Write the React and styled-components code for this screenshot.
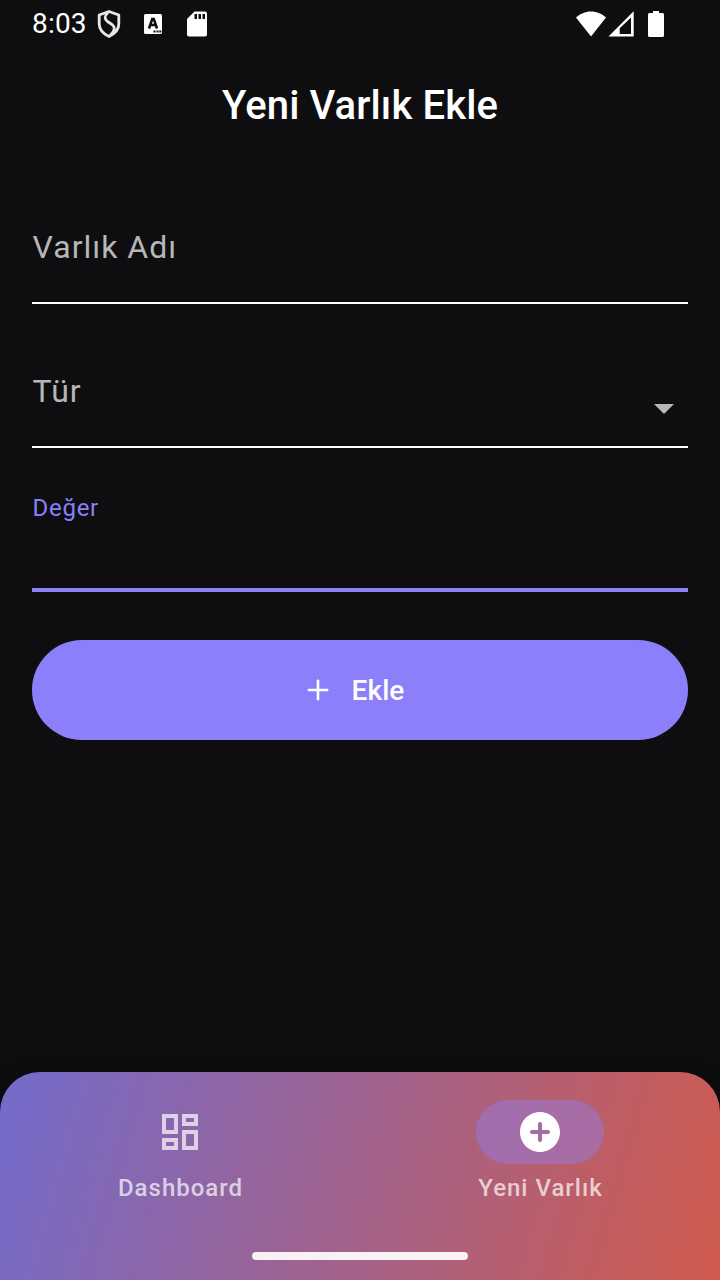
import React from "react";
import styled, { createGlobalStyle } from "styled-components";

const GlobalStyle = createGlobalStyle`
  *, *::before, *::after { box-sizing: border-box; }
  body {
    margin: 0;
    background: #0e0e10;
    font-family: Roboto, "Noto Sans", sans-serif;
  }
`;

const Screen = styled.div`
  display: flex;
  flex-direction: column;
  width: 720px;
  height: 1280px;
  overflow: hidden;
  background: #0e0e10;
  color: #fff;
`;

const StatusBar = styled.header`
  display: flex;
  align-items: center;
  justify-content: space-between;
  height: 48px;
  padding: 0 56px 0 32px;
`;

const StatusGroup = styled.div`
  display: flex;
  align-items: center;
  height: 48px;
`;

const Clock = styled.span`
  width: 65px;
  font-size: 28px;
  line-height: 48px;
  letter-spacing: 0.2px;
`;

const Icon = styled.svg`
  display: block;
  flex: none;
  width: ${(p) => p.$w}px;
  height: ${(p) => p.$h || p.$w}px;
  margin-left: ${(p) => p.$ml || 0}px;
`;

const AppBar = styled.h1`
  height: 112px;
  margin: 0;
  text-align: center;
  font-size: 40px;
  font-weight: 500;
  line-height: 116px;
  letter-spacing: 0.12px;
`;

const Form = styled.main`
  display: flex;
  flex: 1;
  flex-direction: column;
  gap: 32px;
  padding: 32px 32px 0;
`;

const Field = styled.div`
  display: flex;
  align-items: ${(p) => (p.$focused ? "flex-start" : "center")};
  justify-content: space-between;
  height: 112px;
  padding-top: ${(p) => (p.$focused ? 14 : 0)}px;
  border-bottom: ${(p) => (p.$focused ? "4px solid #8b80fa" : "2px solid #fff")};
`;

const Label = styled.span`
  padding-left: 0.6px;
  color: ${(p) => (p.$focused ? "#8b80fa" : "#b7b7b7")};
  font-size: ${(p) => (p.$focused ? 24 : 32)}px;
  line-height: ${(p) => (p.$focused ? 28 : 38)}px;
  letter-spacing: ${(p) => (p.$focused ? 0.7 : 1)}px;
`;

const DropdownArrow = styled(Icon)`
  align-self: flex-end;
  margin-bottom: 14px;
  color: #b7b7b7;
`;

const AddButton = styled.button`
  display: flex;
  align-items: center;
  justify-content: center;
  gap: 16px;
  height: 100px;
  margin: 16px 0 0;
  padding: 0 16px 0 0;
  border: 0;
  border-radius: 50px;
  background: #8b80fa;
  color: #fff;
  font: 500 28px/36px Roboto, "Noto Sans", sans-serif;
  letter-spacing: 0.1px;
`;

const AddButtonText = styled.span`
  padding-top: 2px;
`;

const NavBar = styled.nav`
  display: flex;
  flex-direction: column;
  height: 208px;
  border-radius: 40px 40px 0 0;
  background: linear-gradient(106.11deg, #736bcc, #d05a4c);
  box-shadow: 0 -4px 20px rgba(0, 0, 0, 0.2);
`;

const NavItems = styled.div`
  display: flex;
  flex: 1;
  padding-top: 28px;
`;

const NavItem = styled.div`
  display: flex;
  flex: 1;
  flex-direction: column;
  align-items: center;
  gap: 8px;
`;

const Indicator = styled.div`
  display: flex;
  align-items: center;
  justify-content: center;
  width: 128px;
  height: 64px;
  border-radius: 32px;
  background: ${(p) => (p.$active ? "rgba(140, 130, 252, 0.4)" : "transparent")};
  color: ${(p) => (p.$active ? "#fff" : "rgba(255, 255, 255, 0.7)")};
`;

const NavLabel = styled.span`
  padding-left: 1px;
  color: rgba(255, 255, 255, 0.7);
  font-size: 24px;
  font-weight: 500;
  line-height: 32px;
  letter-spacing: 1px;
`;

const HomeHandle = styled.div`
  align-self: center;
  width: 216px;
  height: 8px;
  margin-bottom: 20px;
  border-radius: 4px;
  background: #f9f2f5;
`;

export default function App() {
  return (
    <>
      <GlobalStyle />
      <Screen>
        <StatusBar>
          <StatusGroup>
            <Clock>8:03</Clock>
            <Icon $w={24} $h={28} viewBox="0 0 24 28" fill="none" stroke="#e8e8e8">
              <path d="M12 1.5 21.800 5v9c0 5.500-4 9.700-9.800 12.500C6.200 23.700 2.200 19.500 2.200 14V5Z" strokeWidth="2.800" strokeLinejoin="round" />
              <path d="M11 2.500C7 6 7.500 9.500 10.500 11.500L15 14.500C19 17.500 17.500 21.500 13 25" strokeWidth="2.800" />
            </Icon>
            <Icon $w={20} $h={22} $ml={22} viewBox="0 0 20 22">
              <rect x="1" y="1" width="18" height="20" rx="1.500" fill="#fff" />
              <path d="M6 15.500 9.200 6h1.600L14 15.500M7.300 12h5.400" fill="none" stroke="#0e0e10" strokeWidth="2.500" />
              <path d="M10.500 17.500h2v2h-2zM13.500 17.500h2v2h-2zM16.300 17.500h2v2h-2z" fill="#0e0e10" />
            </Icon>
            <Icon $w={20} $h={26} $ml={24} viewBox="0 0 20 26">
              <path d="M7.500.5H18a2 2 0 0 1 2 2v21a2 2 0 0 1-2 2H2a2 2 0 0 1-2-2V8Z" fill="#fff" />
              <path d="M7.500 3H10v5H7.500zM11.500 3H14v5h-2.500zM15.500 3H18v5h-2.500z" fill="#0e0e10" />
            </Icon>
          </StatusGroup>
          <StatusGroup>
            <Icon $w={30} $h={26} viewBox="0 0 30 26">
              <path d="M0 6.500C4 3 9 .5 15 .5S26 3 30 6.500L15 25.500Z" fill="#fff" />
            </Icon>
            <Icon $w={26} $h={26} $ml={2} viewBox="0 0 26 26">
              <path fillRule="evenodd" d="M.5 25.500 25.700.3v25.200ZM11.700 23h11.300V6.500L11.700 17.300Z" fill="#fff" />
            </Icon>
            <Icon $w={16} $h={26} $ml={14} viewBox="0 0 16 26">
              <path d="M5 0h6v2h3.500A1.500 1.500 0 0 1 16 3.500v21a1.500 1.500 0 0 1-1.500 1.500h-13A1.500 1.500 0 0 1 0 24.500v-21A1.500 1.500 0 0 1 1.500 2H5Z" fill="#fff" />
            </Icon>
          </StatusGroup>
        </StatusBar>
        <AppBar>Yeni Varlık Ekle</AppBar>
        <Form>
          <Field>
            <Label>Varlık Adı</Label>
          </Field>
          <Field>
            <Label>Tür</Label>
            <DropdownArrow $w={48} viewBox="0 0 24 24" fill="currentColor">
              <path d="m7 10 5 5 5-5z" />
            </DropdownArrow>
          </Field>
          <Field $focused>
            <Label $focused>Değer</Label>
          </Field>
          <AddButton type="button">
            <Icon $w={36} viewBox="0 0 24 24" fill="none" stroke="currentColor">
              <path d="M12 5.900v12.200M5.900 12h12.200" strokeWidth="1.750" strokeLinecap="round" />
            </Icon>
            <AddButtonText>Ekle</AddButtonText>
          </AddButton>
        </Form>
        <NavBar>
          <NavItems>
            <NavItem>
              <Indicator>
                <Icon $w={48} viewBox="0 0 24 24" fill="currentColor">
                  <path d="M19 5v2h-4V5h4M9 5v6H5V5h4m10 8v6h-4v-6h4M9 17v2H5v-2h4M21 3h-8v6h8V3zM11 3H3v10h8V3zm10 8h-8v10h8V11zm-10 4H3v6h8v-6z" />
                </Icon>
              </Indicator>
              <NavLabel>Dashboard</NavLabel>
            </NavItem>
            <NavItem>
              <Indicator $active>
                <Icon $w={48} viewBox="0 0 24 24" fill="currentColor">
                  <path d="M12 2C6.48 2 2 6.480 2 12s4.480 10 10 10 10-4.480 10-10S17.520 2 12 2zm4 11h-3v3c0 .55-.45 1-1 1s-1-.45-1-1v-3H8c-.55 0-1-.45-1-1s.45-1 1-1h3V8c0-.55.45-1 1-1s1 .45 1 1v3h3c.55 0 1 .45 1 1s-.45 1-1 1z" />
                </Icon>
              </Indicator>
              <NavLabel>Yeni Varlık</NavLabel>
            </NavItem>
          </NavItems>
          <HomeHandle />
        </NavBar>
      </Screen>
    </>
  );
}
